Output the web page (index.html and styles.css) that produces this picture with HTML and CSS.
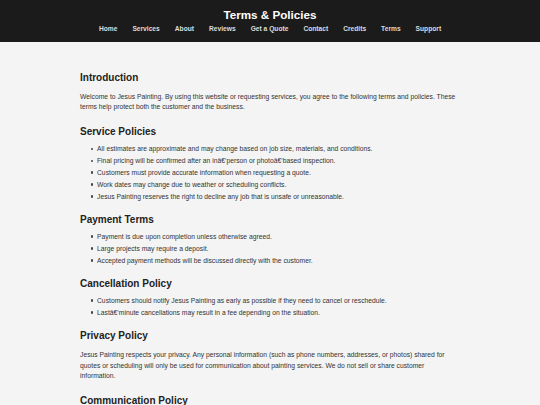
FILE: index.html
```html
<!DOCTYPE html>
<html lang="en">
<head>
<meta charset="utf-8">
<title>Terms &amp; Policies</title>
<link rel="stylesheet" href="styles.css">
</head>
<body>
<header class="site-header">
  <h1 class="site-title">Terms &amp; Policies</h1>
  <nav class="site-nav">
    <a href="#">Home</a>
    <a href="#">Services</a>
    <a href="#">About</a>
    <a href="#">Reviews</a>
    <a href="#">Get a Quote</a>
    <a href="#">Contact</a>
    <a href="#">Credits</a>
    <a href="#">Terms</a>
    <a href="#">Support</a>
  </nav>
</header>
<main class="content">
  <h2 class="first">Introduction</h2>
  <p>Welcome to Jesus Painting. By using this website or requesting services, you agree to the following terms and policies. These terms help protect both the customer and the business.</p>

  <h2>Service Policies</h2>
  <ul>
    <li>All estimates are approximate and may change based on job size, materials, and conditions.</li>
    <li>Final pricing will be confirmed after an inâ€‘person or photoâ€‘based inspection.</li>
    <li>Customers must provide accurate information when requesting a quote.</li>
    <li>Work dates may change due to weather or scheduling conflicts.</li>
    <li>Jesus Painting reserves the right to decline any job that is unsafe or unreasonable.</li>
  </ul>

  <h2>Payment Terms</h2>
  <ul>
    <li>Payment is due upon completion unless otherwise agreed.</li>
    <li>Large projects may require a deposit.</li>
    <li>Accepted payment methods will be discussed directly with the customer.</li>
  </ul>

  <h2>Cancellation Policy</h2>
  <ul>
    <li>Customers should notify Jesus Painting as early as possible if they need to cancel or reschedule.</li>
    <li>Lastâ€‘minute cancellations may result in a fee depending on the situation.</li>
  </ul>

  <h2>Privacy Policy</h2>
  <p>Jesus Painting respects your privacy. Any personal information (such as phone numbers, addresses, or photos) shared for quotes or scheduling will only be used for communication about painting services. We do not sell or share customer information.</p>

  <h2>Communication Policy</h2>
  <p>By contacting Jesus Painting, you agree to receive calls, texts, or emails related to your request.</p>
</main>
</body>
</html>
```
FILE: styles.css
```css
html, body {
  margin: 0;
  padding: 0;
}

body {
  background: #f4f4f4;
  color: #333;
  font-family: "Liberation Sans", Arial, sans-serif;
  font-size: 6.75px;
  line-height: 10.67px;
}

.site-header {
  background: #1b1b1b;
  text-align: center;
  padding: 8px 0 7.3px;
}

.site-title {
  margin: 0;
  color: #fff;
  font-size: 11.67px;
  line-height: 14px;
  font-weight: bold;
}

.site-nav {
  margin-top: 2px;
  line-height: 10.67px;
  display: flex;
  justify-content: center;
  gap: 15px;
}

.site-nav a {
  color: #dddddd;
  font-weight: bold;
  font-size: 6.67px;
  text-decoration: none;
}

.content {
  max-width: 380px;
  margin: 0 auto;
  padding: 30px 0 30px;
}

.content h2 {
  font-size: 10px;
  line-height: 11.5px;
  margin: 11.5px 0 6.4px;
  color: #222;
  font-weight: bold;
}

.content h2.first {
  margin-top: 0;
}

.content p {
  margin: 8.33px 0 13px;
}

.content ul {
  margin: 0;
  padding-left: 17px;
  list-style: none;
}

.content li {
  margin-bottom: 1.3px;
}

.content li::before {
  content: "";
  display: inline-block;
  width: 2.2px;
  height: 2.2px;
  border-radius: 50%;
  background: #444;
  margin-left: -6.2px;
  margin-right: 4px;
  vertical-align: 1.3px;
}
```
